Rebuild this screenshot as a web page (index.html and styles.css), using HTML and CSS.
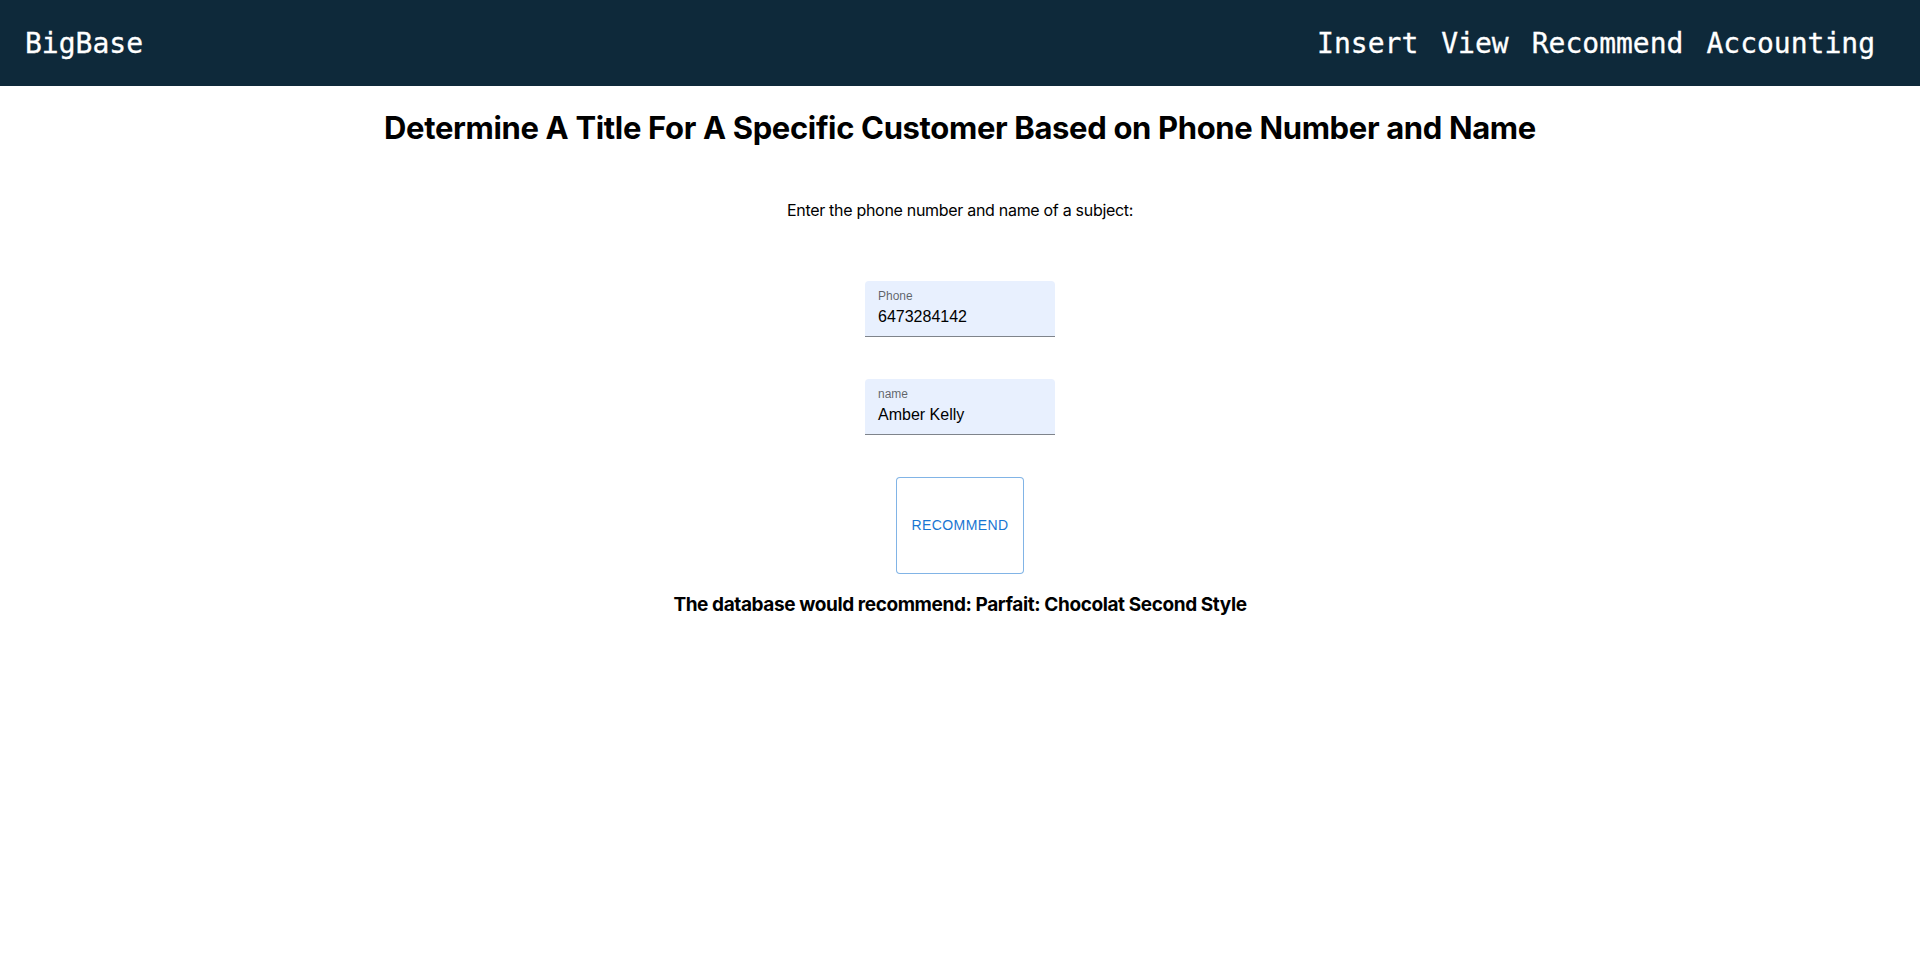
FILE: index.html
```html
<!DOCTYPE html>
<html lang="en">
<head>
<meta charset="utf-8">
<title>BigBase</title>
<link rel="stylesheet" href="styles.css">
</head>
<body>
<header class="topbar">
  <div class="brand">BigBase</div>
  <nav class="nav">
    <a class="nav-link" href="#">Insert</a>
    <a class="nav-link" href="#">View</a>
    <a class="nav-link" href="#">Recommend</a>
    <a class="nav-link" href="#">Accounting</a>
  </nav>
</header>
<main class="content">
  <h1 class="title">Determine A Title For A Specific Customer Based on Phone Number and Name</h1>
  <p class="prompt">Enter the phone number and name of a subject:</p>
  <div class="field">
    <label class="field-label">Phone</label>
    <div class="field-value">6473284142</div>
  </div>
  <div class="field">
    <label class="field-label">name</label>
    <div class="field-value">Amber Kelly</div>
  </div>
  <button class="btn-outline" type="button">Recommend</button>
  <h3 class="result">The database would recommend: Parfait: Chocolat Second Style</h3>
</main>
</body>
</html>
```

FILE: styles.css
```css
html, body {
  margin: 0;
  padding: 0;
  background: #ffffff;
}

body {
  font-family: Inter, "Noto Sans", sans-serif;
  color: #000000;
}

.topbar {
  height: 86px;
  background: #0e293a;
  display: flex;
  align-items: center;
  justify-content: space-between;
  padding: 0 45px 0 25px;
  box-sizing: border-box;
}

.brand {
  font-family: "DejaVu Sans Mono", monospace;
  font-size: 28px;
  color: #ffffff;
  -webkit-text-stroke: 0.3px #ffffff;
}

.nav {
  display: flex;
  gap: 23px;
}

.nav-link {
  font-family: "DejaVu Sans Mono", monospace;
  font-size: 28px;
  color: #ffffff;
  text-decoration: none;
  -webkit-text-stroke: 0.3px #ffffff;
}

.content {
  display: flex;
  flex-direction: column;
  align-items: center;
}

.title {
  font-family: Inter, sans-serif;
  font-size: 31px;
  letter-spacing: -0.35px;
  font-weight: 700;
  margin: 22px 0 0;
  line-height: 39px;
}

.prompt {
  font-family: Inter, sans-serif;
  font-size: 16px;
  letter-spacing: -0.3px;
  margin: 53px 0 0;
  line-height: 20px;
}

.field {
  width: 190px;
  height: 56px;
  box-sizing: border-box;
  background: #e8f0fe;
  border-radius: 4px 4px 0 0;
  border-bottom: 1px solid rgba(0, 0, 0, 0.45);
  padding: 8px 12px 0 13px;
  margin-top: 42px;
  font-family: "Liberation Sans", Arial, sans-serif;
}

.prompt + .field {
  margin-top: 61px;
}

.field-label {
  display: block;
  font-size: 12px;
  line-height: 14px;
  color: rgba(0, 0, 0, 0.6);
}

.field-value {
  font-size: 16px;
  line-height: 20px;
  margin-top: 4px;
  color: #000000;
}

.btn-outline {
  margin-top: 42px;
  width: 128px;
  height: 97px;
  background: #ffffff;
  border: 1px solid rgba(25, 118, 210, 0.55);
  border-radius: 4px;
  color: #1976d2;
  font-family: "Liberation Sans", Arial, sans-serif;
  font-size: 14px;
  letter-spacing: 0.4px;
  text-transform: uppercase;
  padding: 0 0 2px;
  cursor: pointer;
}

.result {
  font-family: Inter, sans-serif;
  font-size: 19px;
  letter-spacing: -0.4px;
  font-weight: 700;
  line-height: 24px;
  margin: 19px 0 0;
}
```
